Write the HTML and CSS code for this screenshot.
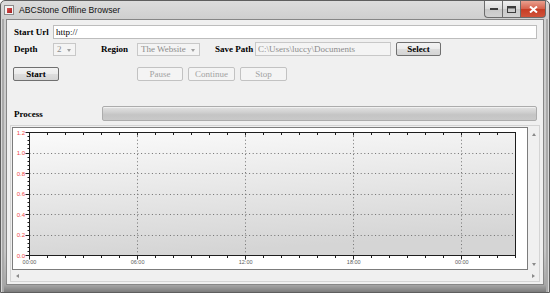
FILE: index.html
```html
<!DOCTYPE html>
<html lang="en">
<head>
    <meta charset="UTF-8">
    <title>ABCStone Offline Browser</title>
    <link rel="stylesheet" href="styles.css">
</head>
<body>

<div class="window">
    <div class="titlebar">
        <span class="app-icon"><span></span></span>
        <span class="title">ABCStone Offline Browser</span>
        <div class="controls">
            <span class="ctl ctl-min"><svg width="8" height="3"><rect x="0" y="0" width="8" height="2" fill="#3c3c3c"/></svg></span>
            <span class="ctl ctl-max"><svg width="9" height="7"><rect x="0.5" y="0.5" width="8" height="6" fill="none" stroke="#3c3c3c"/><rect x="1" y="1" width="7" height="1.5" fill="#3c3c3c"/></svg></span>
            <span class="ctl ctl-close"><svg width="9" height="7"><path d="M1 0.5 L8 6.5 M8 0.5 L1 6.5" stroke="#fff" stroke-width="2"/></svg></span>
        </div>
    </div>

    <div class="frame">
        <div class="client">
            <div class="row url-row">
                <label class="lbl w-39" for="url">Start Url</label>
                <input class="field url-field" type="text" id="url" value="http://">
            </div>

            <div class="row opts-row">
                <span class="lbl w-39">Depth</span>
                <span class="combo combo-depth">2<i class="arrow"></i></span>
                <span class="lbl lbl-region">Region</span>
                <span class="combo combo-region">The Website<i class="arrow"></i></span>
                <span class="lbl lbl-path">Save Path</span>
                <input class="field path-field" type="text" value="C:\Users\luccy\Documents" disabled>
                <button class="btn btn-select" type="button">Select</button>
            </div>

            <div class="row action-row">
                <button class="btn btn-start" type="button">Start</button>
                <button class="btn btn-off btn-pause" type="button" disabled>Pause</button>
                <button class="btn btn-off" type="button" disabled>Continue</button>
                <button class="btn btn-off" type="button" disabled>Stop</button>
            </div>

            <div class="row process-row">
                <span class="lbl lbl-process">Process</span>
                <div class="progress"></div>
            </div>

            <div class="scroll-area">
                <div class="chart-box">
                    <svg id="chart" width="514" height="141" viewBox="0 0 514 141">
                        <defs>
                            <linearGradient id="plotFill" x1="0" y1="0" x2="0.25" y2="1">
                                <stop offset="0" stop-color="#fbfbfb"/>
                                <stop offset="1" stop-color="#d5d5d5"/>
                            </linearGradient>
                        </defs>
                    </svg>
                </div>
                <div class="vbar"><i class="tri tri-up"></i><i class="tri tri-down"></i></div>
                <div class="hbar"><i class="tri tri-left"></i><i class="tri tri-right"></i></div>
            </div>
        </div>
    </div>
</div>

<script>
    const NS = "http://www.w3.org/2000/svg";
    const chart = document.getElementById("chart");

    const plotLeft = 16.5, plotTop = 4.5;
    const hour = 18.012, step = 20.5;
    const plotRight = plotLeft + hour * 27;
    const plotBottom = plotTop + step * 6;

    function add(tag, attrs, text) {
        const el = document.createElementNS(NS, tag);
        for (const k in attrs) el.setAttribute(k, attrs[k]);
        if (text) el.textContent = text;
        chart.appendChild(el);
        return el;
    }

    function px(v) {
        return Math.round(v - 0.5) + 0.5;
    }

    // plot background
    add("rect", { x: plotLeft, y: plotTop, width: plotRight - plotLeft, height: plotBottom - plotTop, fill: "url(#plotFill)" });

    // dotted grid
    for (let k = 1; k <= 5; k++) {
        const y = px(plotTop + step * k);
        add("line", { x1: plotLeft, y1: y, x2: plotRight, y2: y, stroke: "#6f6f6f", "stroke-dasharray": "1 2.6" });
    }
    [6, 12, 18, 24].forEach(function(h) {
        const x = px(plotLeft + hour * h);
        add("line", { x1: x, y1: plotTop, x2: x, y2: plotBottom, stroke: "#6f6f6f", "stroke-dasharray": "1 2.6" });
    });

    // frame
    add("rect", { x: plotLeft, y: plotTop, width: px(plotRight) - plotLeft, height: plotBottom - plotTop, fill: "none", stroke: "#1e1e1e" });

    // ticks
    let d = "";
    for (let h = 0; h <= 27; h++) {
        const x = px(plotLeft + h * hour);
        const major = h % 6 === 0;
        d += "M" + x + " " + plotBottom + "v" + (major ? 4 : 2.5);
        d += "M" + x + " " + plotTop + "v" + (major ? 3 : 2.5);
    }
    for (let i = 0; i <= 30; i++) {
        const y = px(plotBottom - i * step / 5);
        d += "M" + plotLeft + " " + y + "h-" + (i % 5 === 0 ? 4 : 2);
    }
    add("path", { d: d, stroke: "#1e1e1e", fill: "none" });

    // axis labels
    ["0.0", "0.2", "0.4", "0.6", "0.8", "1.0", "1.2"].forEach(function(t, i) {
        add("text", { x: 12, y: plotBottom - step * i + 2, class: "ylab" }, t);
    });
    ["00:00", "06:00", "12:00", "18:00", "00:00"].forEach(function(t, i) {
        add("text", { x: plotLeft + hour * 6 * i, y: 136, class: "xlab" }, t);
    });
</script>

</body>
</html>
```

FILE: styles.css
```css
* {
    box-sizing: border-box;
}

body {
    margin: 0;
    font-family: "Liberation Serif", "DejaVu Serif", serif;
    font-size: 9px;
    color: #000;
}

.window {
    width: 550px;
    height: 293px;
    border: 1px solid #5e5e5e;
    border-radius: 5px 5px 0 0;
    background: linear-gradient(#dcdcdc, #cfcfcf 18px, #c6c6c6 250px, #a6a6a6 284px, #7c7c7c);
    display: flex;
    flex-direction: column;
}

/* title bar */

.titlebar {
    height: 18px;
    padding: 0 3px;
    display: flex;
    align-items: center;
    flex: none;
}

.app-icon {
    width: 10px;
    height: 10px;
    border: 1px solid #8c8c8c;
    background: #f4f4f4;
    display: flex;
    align-items: center;
    justify-content: center;
}

.app-icon span {
    width: 5px;
    height: 5px;
    background: linear-gradient(135deg, #e05050, #a02020);
}

.title {
    margin-left: 5px;
    font-family: "Liberation Sans", Arial, sans-serif;
    font-size: 8.6px;
    color: #111;
}

.controls {
    margin-left: auto;
    align-self: flex-start;
    display: flex;
}

.ctl {
    height: 17px;
    display: flex;
    align-items: center;
    justify-content: center;
    border: 1px solid #6c6c6c;
    border-top: none;
}

.ctl-min,
.ctl-max {
    background: linear-gradient(#f0f0f0, #dadada 50%, #c8c8c8 51%, #d2d2d2);
}

.ctl-min {
    width: 18px;
    border-right: none;
    border-radius: 0 0 0 4px;
}

.ctl-max {
    width: 19px;
}

.ctl-close {
    width: 25px;
    border-left: none;
    border-radius: 0 0 4px 0;
    background: linear-gradient(#e9a08e, #d6604a 50%, #c63d24 51%, #d0533a);
}

/* frame + client */

.frame {
    flex: 1;
    padding: 0 5px 7px;
    display: flex;
    box-shadow: inset 1px 0 #d8d8d8, inset -1px 0 #d8d8d8, inset 3px 0 #a9a9a9, inset -3px 0 #a9a9a9;
}

.client {
    flex: 1;
    background: #f0f0f0;
    border: 1px solid #868686;
    padding-left: 7px;
    display: flex;
    flex-direction: column;
}

.row {
    display: flex;
    align-items: center;
    flex: none;
}

.lbl {
    font-weight: bold;
    flex: none;
}

.w-39 {
    width: 39px;
}

.field {
    font: inherit;
    height: 14px;
    padding: 0 2px;
    border: 1px solid #bdbdbd;
    background: #fff;
    color: #000;
    outline: none;
}

.url-row {
    margin-top: 5px;
    height: 14px;
}

.url-field {
    width: 484px;
}

.opts-row {
    margin-top: 3px;
    height: 14px;
}

.combo {
    height: 13px;
    border: 1px solid #c8c8c8;
    background: #f4f4f4;
    color: #8c8c8c;
    padding-left: 3px;
    display: flex;
    align-items: center;
    position: relative;
    flex: none;
}

.combo .arrow {
    position: absolute;
    right: 4px;
    top: 5px;
    border-left: 2.5px solid transparent;
    border-right: 2.5px solid transparent;
    border-top: 3px solid #a0a0a0;
}

.combo-depth {
    width: 23px;
}

.lbl-region {
    margin-left: 25px;
    width: 36px;
}

.combo-region {
    width: 63px;
}

.lbl-path {
    margin-left: 15px;
    width: 40px;
}

.path-field {
    width: 136px;
    border-color: #c8c8c8;
    background: #f4f4f4;
    color: #8c8c8c;
}

.btn {
    font: inherit;
    font-weight: bold;
    height: 14px;
    padding: 0;
    border: 1px solid #707070;
    border-radius: 2px;
    background: linear-gradient(#f3f3f3, #ebebeb 50%, #dddddd 51%, #d4d4d4);
    color: #000;
    flex: none;
}

.btn-select {
    margin-left: 5px;
    width: 45px;
}

.action-row {
    margin-top: 11px;
    height: 14px;
    margin-left: -1px;
}

.btn-start {
    width: 46px;
}

.btn-off {
    width: 47px;
    margin-left: 5px;
    font-weight: normal;
    border-color: #c2c2c2;
    background: #f4f4f4;
    color: #a2a2a2;
}

.btn-pause {
    width: 46px;
    margin-left: 78px;
}

.process-row {
    margin-top: 25px;
    height: 15px;
}

.lbl-process {
    width: 88px;
}

.progress {
    width: 435px;
    height: 15px;
    border: 1px solid #acacac;
    border-radius: 2px;
    background: linear-gradient(#e2e2e2, #d0d0d0 40%, #c4c4c4 60%, #c9c9c9);
    box-shadow: inset 0 1px #f0f0f0;
}

/* chart with its scroll bars */

.scroll-area {
    margin-top: 4px;
    margin-left: -4px;
    width: 530px;
    height: 157px;
    border: 1px solid #d4d4d4;
    padding: 1px 0 0 1px;
    display: grid;
    grid-template-columns: 1fr 11px;
    grid-template-rows: 143px 11px;
    flex: none;
}

.chart-box {
    border: 1px solid #7c7c7c;
    background: #fff;
}

.chart-box svg {
    display: block;
}

.ylab {
    font-family: "Liberation Sans", Arial, sans-serif;
    font-size: 6px;
    fill: #f04848;
    text-anchor: end;
}

.xlab {
    font-family: "Liberation Sans", Arial, sans-serif;
    font-size: 5.5px;
    fill: #5a5a5a;
    text-anchor: middle;
}

.vbar {
    display: flex;
    flex-direction: column;
    justify-content: space-between;
    align-items: center;
    padding: 6px 0 4px;
}

.hbar {
    grid-column: 1 / 3;
    display: flex;
    justify-content: space-between;
    align-items: center;
    padding: 0 4px 0 4px;
}

.tri {
    width: 0;
    height: 0;
}

.tri-up {
    border-left: 2.5px solid transparent;
    border-right: 2.5px solid transparent;
    border-bottom: 3px solid #8a8a8a;
}

.tri-down {
    border-left: 2.5px solid transparent;
    border-right: 2.5px solid transparent;
    border-top: 3px solid #8a8a8a;
}

.tri-left {
    border-top: 2.5px solid transparent;
    border-bottom: 2.5px solid transparent;
    border-right: 3px solid #8a8a8a;
}

.tri-right {
    border-top: 2.5px solid transparent;
    border-bottom: 2.5px solid transparent;
    border-left: 3px solid #8a8a8a;
}
```
